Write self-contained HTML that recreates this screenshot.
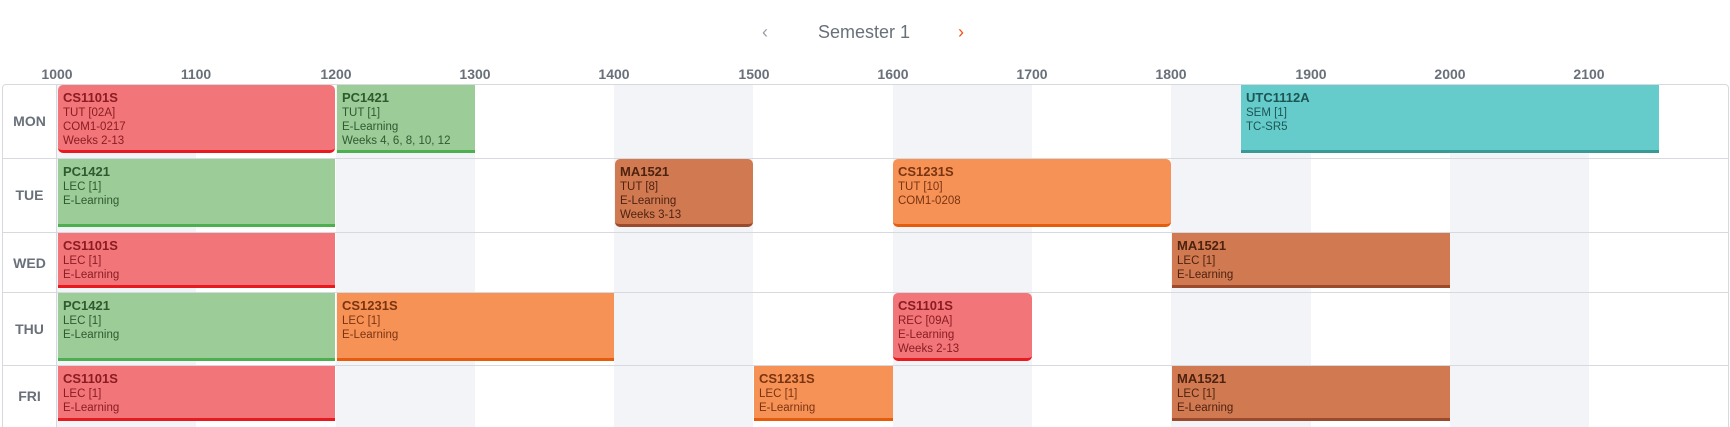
<!DOCTYPE html>
<html><head><meta charset="utf-8"><style>
*{box-sizing:border-box;margin:0;padding:0}
html,body{width:1730px;height:427px;overflow:hidden}
body{background:#fff;font-family:"Liberation Sans",sans-serif;position:relative}
.a{position:absolute}
.hdr{top:22px;font-size:18px;color:#69707a}
.hl{top:66px;font-size:14px;font-weight:bold;color:#69707a;width:60px;text-align:center}
.grid{left:2px;top:84px;width:1727px;height:360px;border:1px solid #d6d9de;border-radius:4px}
.sh{top:85px;height:342px;background:#f3f4f8}
.rl{left:2px;width:1727px;height:1px;background:#d6d9de}
.dl{left:2px;width:55px;text-align:center;font-size:14px;font-weight:bold;color:#69707a}
.b{position:absolute;padding:4px 5px 0 5px;font-size:11.5px;line-height:14px;border-bottom:3px solid;overflow:hidden}
.b b{display:block;font-size:13px;line-height:17px}
.r{background:#f27679;border-color:#e8191f;color:#8a1c22}
.g{background:#9ccc98;border-color:#4caf50;color:#2f5a2e}
.o{background:#f79257;border-color:#e65c0a;color:#7a3410}
.n{background:#d17a52;border-color:#9b4a2c;color:#4e2210}
.t{background:#66cccb;border-color:#389a96;color:#1d5553}
.rd{border-radius:5px}
</style></head><body>
<div class="a hdr" style="left:762px;color:#9aa0a8">&#8249;</div>
<div class="a hdr" style="left:818px">Semester 1</div>
<div class="a hdr" style="left:958px;color:#f4511e">&#8250;</div>

<div class="a hl" style="left:27px">1000</div>
<div class="a hl" style="left:166px">1100</div>
<div class="a hl" style="left:306px">1200</div>
<div class="a hl" style="left:445px">1300</div>
<div class="a hl" style="left:584px">1400</div>
<div class="a hl" style="left:724px">1500</div>
<div class="a hl" style="left:863px">1600</div>
<div class="a hl" style="left:1002px">1700</div>
<div class="a hl" style="left:1141px">1800</div>
<div class="a hl" style="left:1281px">1900</div>
<div class="a hl" style="left:1420px">2000</div>
<div class="a hl" style="left:1559px">2100</div>

<div class="a sh" style="left:57px;width:139px"></div>
<div class="a sh" style="left:336px;width:139px"></div>
<div class="a sh" style="left:614px;width:139px"></div>
<div class="a sh" style="left:893px;width:139px"></div>
<div class="a sh" style="left:1171px;width:140px"></div>
<div class="a sh" style="left:1450px;width:139px"></div>

<div class="a grid"></div>
<div class="a" style="left:56px;top:84px;width:1px;height:343px;background:#d6d9de"></div>
<div class="a rl" style="top:158px"></div>
<div class="a rl" style="top:232px"></div>
<div class="a rl" style="top:292px"></div>
<div class="a rl" style="top:365px"></div>

<div class="a dl" style="top:113px">MON</div>
<div class="a dl" style="top:187px">TUE</div>
<div class="a dl" style="top:255px">WED</div>
<div class="a dl" style="top:321px">THU</div>
<div class="a dl" style="top:388px">FRI</div>

<!-- MON -->
<div class="b r rd" style="left:58px;top:85px;width:277px;height:68px"><b>CS1101S</b>TUT [02A]<br>COM1-0217<br>Weeks 2-13</div>
<div class="b g" style="left:337px;top:85px;width:138px;height:68px"><b>PC1421</b>TUT [1]<br>E-Learning<br>Weeks 4, 6, 8, 10, 12</div>
<div class="b t" style="left:1241px;top:85px;width:418px;height:68px"><b>UTC1112A</b>SEM [1]<br>TC-SR5</div>
<!-- TUE -->
<div class="b g" style="left:58px;top:159px;width:277px;height:68px"><b>PC1421</b>LEC [1]<br>E-Learning</div>
<div class="b n rd" style="left:615px;top:159px;width:138px;height:68px"><b>MA1521</b>TUT [8]<br>E-Learning<br>Weeks 3-13</div>
<div class="b o rd" style="left:893px;top:159px;width:278px;height:68px"><b>CS1231S</b>TUT [10]<br>COM1-0208</div>
<!-- WED -->
<div class="b r" style="left:58px;top:233px;width:277px;height:55px"><b>CS1101S</b>LEC [1]<br>E-Learning</div>
<div class="b n" style="left:1172px;top:233px;width:278px;height:55px"><b>MA1521</b>LEC [1]<br>E-Learning</div>
<!-- THU -->
<div class="b g" style="left:58px;top:293px;width:277px;height:68px"><b>PC1421</b>LEC [1]<br>E-Learning</div>
<div class="b o" style="left:337px;top:293px;width:277px;height:68px"><b>CS1231S</b>LEC [1]<br>E-Learning</div>
<div class="b r rd" style="left:893px;top:293px;width:139px;height:68px"><b>CS1101S</b>REC [09A]<br>E-Learning<br>Weeks 2-13</div>
<!-- FRI -->
<div class="b r" style="left:58px;top:366px;width:277px;height:55px"><b>CS1101S</b>LEC [1]<br>E-Learning</div>
<div class="b o" style="left:754px;top:366px;width:139px;height:55px"><b>CS1231S</b>LEC [1]<br>E-Learning</div>
<div class="b n" style="left:1172px;top:366px;width:278px;height:55px"><b>MA1521</b>LEC [1]<br>E-Learning</div>
</body></html>
